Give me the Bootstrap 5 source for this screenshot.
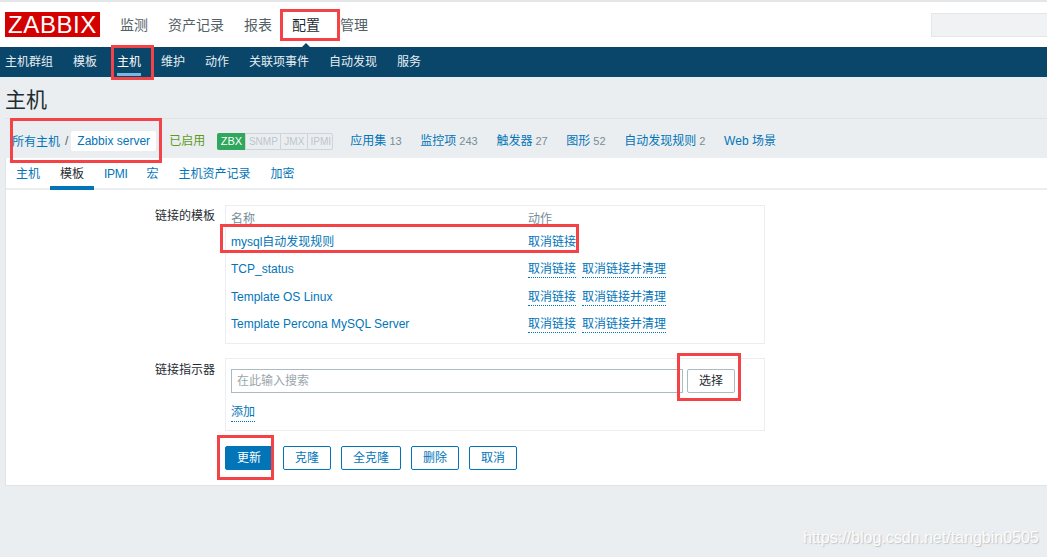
<!DOCTYPE html>
<html lang="zh">
<head>
<meta charset="utf-8">
<title>主机</title>
<link href="https://cdn.jsdelivr.net/npm/bootstrap@5.3.0/dist/css/bootstrap.min.css" rel="stylesheet">
<style>
html,body{height:557px;overflow:hidden}
body{position:relative;background:#ebeef0;font-family:"Liberation Sans","Noto Sans CJK SC",sans-serif;font-size:12px;color:#1f2c33;line-height:16px}
a{text-decoration:none;color:#0275b8}
.zb-top{height:47px;background:#fff;border-top:2px solid #e4e6e8;padding:10px 0 0 5px}
.zb-logo{width:95px;height:25px;background:#d40000;color:#fff;font-size:24px;line-height:25px;text-align:center;letter-spacing:.6px}
.zb-main{gap:20px;margin-left:20px;font-size:14px;height:25px;line-height:26px}
.zb-main a{color:#545f66;position:relative}
.zb-main a.zb-on{color:#1f2c33}
.zb-main a.zb-on::after{content:"";position:absolute;left:7px;top:31px;border:7px solid transparent;border-top:0;border-bottom-color:#0a466a}
.zb-search{width:116px;height:24px;background:#f1f2f3;border:1px solid #e4e6e8;border-right:0;margin-top:1px}
.zb-sub{height:30px;background:#0a466a;padding-left:5px;gap:20px;line-height:30px}
.zb-sub a{color:#e4eef4;position:relative;height:30px}
.zb-sub a.zb-on{color:#fff;border-bottom:3px solid #7ab8e0;height:29px}
.zb-title{font-size:21px;line-height:24px;margin:0;padding:11px 0 6px 5px;font-weight:400;height:41px;color:#1f2c33}
.zb-crumbs{height:40px;margin-left:5px;border-top:1px solid #dfe4e7;padding:12px 0 0 7px}
.zb-home{margin-top:3px}
.zb-sep{margin:2px 3px 0 5px;color:#545f66}
.zb-cur{background:#fff;padding:2px 6px;height:20px;border-radius:2px;color:#0275b8;width:85px;white-space:nowrap}
.zb-ok{color:#5d9a1d;margin-left:13px;width:48px;margin-top:2px}
.zb-badges{height:17px;margin-top:2px;font-size:10px;line-height:15px;border-radius:2px;width:116px;border:1px solid #ccd5d9;color:#bcc6cb;background:#ebeef0}
.zb-badges span{border-left:1px solid #ccd5d9;padding:0 1px;flex:none;text-align:center}
.zb-badges .zb-snmp{width:35px}
.zb-badges .zb-jmx{width:27px}
.zb-badges .zb-ipmi{width:26px}
.zb-badges .zb-zbx{background:#2fa75c;color:#fff;font-size:11px;border-left:0;width:28px;margin:-1px 0 -1px -1px;padding-top:1px;border-radius:2px 0 0 2px}
.zb-links{gap:18.7px;margin-left:17px;white-space:nowrap;margin-top:2px}
.zb-links i{font-style:normal;color:#768d99;font-size:11px;margin-left:3px}
.zb-panel{margin-left:5px;height:328px;background:#fff;border-bottom:1px solid #dfe4e7;border-left:1px solid #dfe4e7}
.zb-tabs{height:32px;gap:20px;padding-left:10px;border-bottom:2px solid #ebeef0;line-height:32px}
.zb-tabs a{position:relative}
.zb-tabs a.zb-on{color:#1f2c33}
.zb-tabs a.zb-on::after{content:"";position:absolute;left:-10px;right:-10px;bottom:-2px;height:4px;background:#0275b8}
.zb-tabs a.zb-tight{letter-spacing:-.3px;margin-right:-1px}
.zb-row{display:flex;margin-top:15px}
.zb-row+.zb-row{margin-top:14px}
.zb-label{width:219px;text-align:right;padding:3px 10px 0 0;color:#1f2c33;flex:none}
.zb-row+.zb-row .zb-label{padding-top:4px}
.zb-box{width:540px;border:1px solid #ebeef0;padding:5px}
.zb-tpl{height:139px}
.zb-search-box{height:73px;padding-top:10px}
.table.zb-table{--bs-table-bg:transparent;--bs-table-border-color:transparent;width:100%;margin:0;color:#0275b8;table-layout:fixed}
.table.zb-table>:not(caption)>*>*{padding:0;border:0;font-size:12px;color:#0275b8;height:27.5px;vertical-align:middle}
.table.zb-table>thead>tr>th{font-weight:400;color:#768d99;height:17px;vertical-align:top;line-height:14px;padding-top:1px}
.zb-name{width:297px}
.zb-dot{border-bottom:1px dotted #0275b8;padding-bottom:1px;margin-right:6px}
.zb-input.form-control{width:452px;height:24px;border:1px solid #acbbc2;color:#9aa6ac;padding:3px 5px;background:#fff;box-shadow:none;font-size:12px;border-radius:0;min-height:0;flex:none}
.zb-input::placeholder{color:#9aa6ac}
.btn.zb-pick{width:48px;height:24px;margin-left:4px;border:1px solid #acbbc2;border-radius:2px;padding:0;font-size:12px;color:#1f2c33;background:#fff}
.zb-add{display:inline-block;margin-top:12px;line-height:15px}
.zb-actions{gap:10px;margin:15px 0 0 219px}
.zb-actions .btn{height:24px;width:48px;padding:0;font-size:12px;line-height:20px;border:1px solid #0275b8;color:#0275b8;border-radius:2px;background:#fff}
.zb-actions .btn.zb-wide{width:60px}
.zb-actions .btn.zb-primary{background:#0275b8;color:#fff}
.zb-mark{position:absolute;border:3px solid #f44347;pointer-events:none}
.zb-m1{left:280px;top:9px;width:60px;height:32px}
.zb-m2{left:111px;top:45px;width:43px;height:35px}
.zb-m3{left:10px;top:118px;width:152px;height:45px}
.zb-m4{left:220px;top:224px;width:359px;height:29px}
.zb-m5{left:677px;top:353px;width:64px;height:48px}
.zb-m6{left:217px;top:435px;width:57px;height:45px}
.zb-water{position:absolute;left:803px;top:529px;font-size:16px;line-height:18px;color:#fff;opacity:.85;text-shadow:1px 1px 1px rgba(90,100,110,.35);white-space:nowrap}
</style>
</head>
<body>
<header class="zb-top d-flex">
  <div class="zb-logo">ZABBIX</div>
  <nav class="zb-main d-flex"><a href="#">监测</a><a href="#">资产记录</a><a href="#">报表</a><a href="#" class="zb-on">配置</a><a href="#">管理</a></nav>
  <div class="zb-search ms-auto"></div>
</header>
<nav class="zb-sub d-flex">
  <a href="#">主机群组</a><a href="#">模板</a><a href="#" class="zb-on">主机</a><a href="#">维护</a><a href="#">动作</a><a href="#">关联项事件</a><a href="#">自动发现</a><a href="#">服务</a>
</nav>
<h1 class="zb-title">主机</h1>
<div class="zb-crumbs d-flex align-items-start">
  <a href="#" class="zb-home">所有主机</a><span class="zb-sep">/</span><a href="#" class="zb-cur">Zabbix server</a>
  <span class="zb-ok">已启用</span>
  <div class="zb-badges d-flex"><span class="zb-zbx">ZBX</span><span class="zb-snmp">SNMP</span><span class="zb-jmx">JMX</span><span class="zb-ipmi">IPMI</span></div>
  <div class="zb-links d-flex"><a href="#">应用集<i>13</i></a><a href="#">监控项<i>243</i></a><a href="#">触发器<i>27</i></a><a href="#">图形<i>52</i></a><a href="#">自动发现规则<i>2</i></a><a href="#">Web 场景</a></div>
</div>
<main class="zb-panel">
  <div class="zb-tabs d-flex"><a href="#">主机</a><a href="#" class="zb-on">模板</a><a href="#" class="zb-tight">IPMI</a><a href="#">宏</a><a href="#">主机资产记录</a><a href="#">加密</a></div>
  <div class="zb-row">
    <div class="zb-label">链接的模板</div>
    <div class="zb-box zb-tpl">
      <table class="table zb-table">
        <thead><tr><th class="zb-name">名称</th><th>动作</th></tr></thead>
        <tbody>
          <tr><td>mysql自动发现规则</td><td><a href="#" class="zb-dot">取消链接</a></td></tr>
          <tr><td>TCP_status</td><td><a href="#" class="zb-dot">取消链接</a><a href="#" class="zb-dot">取消链接并清理</a></td></tr>
          <tr><td>Template OS Linux</td><td><a href="#" class="zb-dot">取消链接</a><a href="#" class="zb-dot">取消链接并清理</a></td></tr>
          <tr><td>Template Percona MySQL Server</td><td><a href="#" class="zb-dot">取消链接</a><a href="#" class="zb-dot">取消链接并清理</a></td></tr>
        </tbody>
      </table>
    </div>
  </div>
  <div class="zb-row">
    <div class="zb-label">链接指示器</div>
    <div class="zb-box zb-search-box">
      <div class="d-flex"><input class="form-control zb-input" placeholder="在此输入搜索"><button type="button" class="btn zb-pick">选择</button></div>
      <a href="#" class="zb-dot zb-add">添加</a>
    </div>
  </div>
  <div class="zb-actions d-flex">
    <button type="button" class="btn zb-primary">更新</button>
    <button type="button" class="btn">克隆</button>
    <button type="button" class="btn zb-wide">全克隆</button>
    <button type="button" class="btn">删除</button>
    <button type="button" class="btn">取消</button>
  </div>
</main>
<div class="zb-mark zb-m1"></div>
<div class="zb-mark zb-m2"></div>
<div class="zb-mark zb-m3"></div>
<div class="zb-mark zb-m4"></div>
<div class="zb-mark zb-m5"></div>
<div class="zb-mark zb-m6"></div>
<div class="zb-water">https://blog.csdn.net/tangbin0505</div>
<script src="https://cdn.jsdelivr.net/npm/bootstrap@5.3.0/dist/js/bootstrap.bundle.min.js"></script>
</body>
</html>
